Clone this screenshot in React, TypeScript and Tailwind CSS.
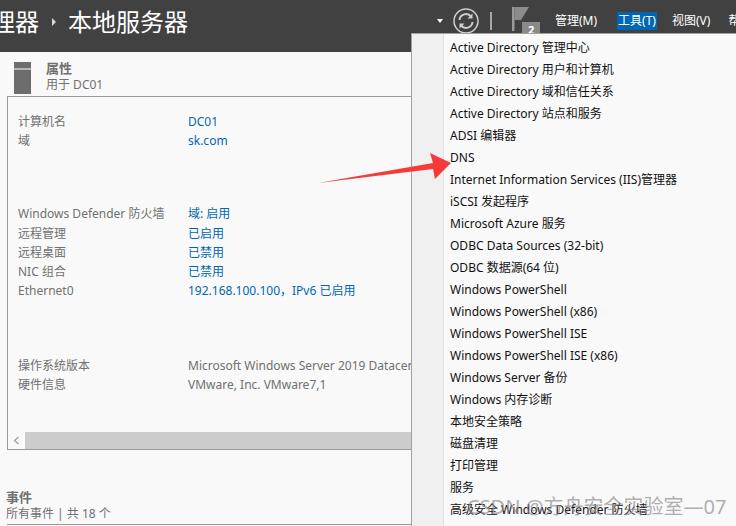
import { useState } from 'react'

const FONT = "font-['Noto_Sans','Noto_Sans_CJK_SC',sans-serif]"

const TOOLS = [
  'Active Directory 管理中心',
  'Active Directory 用户和计算机',
  'Active Directory 域和信任关系',
  'Active Directory 站点和服务',
  'ADSI 编辑器',
  'DNS',
  'Internet Information Services (IIS)管理器',
  'iSCSI 发起程序',
  'Microsoft Azure 服务',
  'ODBC Data Sources (32-bit)',
  'ODBC 数据源(64 位)',
  'Windows PowerShell',
  'Windows PowerShell (x86)',
  'Windows PowerShell ISE',
  'Windows PowerShell ISE (x86)',
  'Windows Server 备份',
  'Windows 内存诊断',
  '本地安全策略',
  '磁盘清理',
  '打印管理',
  '服务',
  '高级安全 Windows Defender 防火墙',
]

function Row({ label, value, link = true }: { label: string; value: string; link?: boolean }) {
  return (
    <div className="flex h-[19.3px] items-center text-xs leading-none whitespace-nowrap">
      <span className="w-[170px] shrink-0 text-[#707070]">{label}</span>
      <span className={link ? 'text-[#0066b4]' : 'text-[#707070]'}>{value}</span>
    </div>
  )
}

function Header() {
  return (
    <div className="flex h-[52px] shrink-0 items-center bg-[#414141] text-white">
      <div className="-ml-[9px] mb-[9px] flex items-center text-2xl leading-none whitespace-nowrap">
        <span>理器</span>
        <span className="mx-[12.5px] h-0 w-0 border-y-[4px] border-l-[4px] border-y-transparent border-l-[#d8d8d8]" />
        <span>本地服务器</span>
      </div>
      <div className="ml-[249px] flex h-full items-center whitespace-nowrap">
        <span className="mt-[-10px] h-0 w-0 border-x-[3.5px] border-t-[4px] border-x-transparent border-t-white" />
        <svg width="28" height="28" viewBox="0 0 28 28" className="mt-[-10px] ml-[9px]" fill="none">
          <circle cx="14" cy="14" r="12" stroke="#cfcfcf" strokeWidth="1.5" />
          <path d="M7.500 13a6.500 6.500 0 0 1 11.500-3.500" stroke="#cfcfcf" strokeWidth="2" />
          <path d="M20.500 15a6.500 6.500 0 0 1-11.500 3.500" stroke="#cfcfcf" strokeWidth="2" />
          <path d="M20.500 6.500v5h-5zM7.500 21.500v-5h5z" fill="#cfcfcf" />
        </svg>
        <span className="mt-[-10px] ml-[10px] h-[18px] w-[2px] bg-[#a8a8a8]" />
        <div className="relative mt-[-12px] ml-[20px] h-[26px] w-[30px] self-center">
          <svg width="18" height="24" viewBox="0 0 18 24" className="absolute top-0 left-0">
            <path d="M0 0h2.500v24H0z" fill="#9a9a9a" />
            <path d="M2.500 0L17 0 9 13H2.500z" fill="#8b8b8b" />
          </svg>
          <span className="absolute top-[15px] left-[10px] h-[14px] w-[18px] bg-[#8a8a8a] pl-[6px] text-[11px] leading-[16px] font-bold">
            2
          </span>
        </div>
        <div className="mt-[-10px] ml-[13px] flex items-center text-xs">
          <span>管理(M)</span>
          <span className="ml-[20px] flex h-[18px] items-center bg-[#0066b4] px-[1px]">工具(T)</span>
          <span className="ml-[15px]">视图(V)</span>
          <span className="ml-[18px]">帮助(H)</span>
        </div>
      </div>
    </div>
  )
}

function Properties() {
  return (
    <div className="w-[411px] shrink-0">
      <div className="flex h-[44px] pl-[14px]">
        <div className="mt-[10px] h-[32px] w-[17px] border-t-[6px] border-[#6d6d6d] bg-[#6d6d6d] shadow-[inset_0_2px_0_#b5b5b5]" />
        <div className="ml-[15px] pt-[8px] text-[#707070]">
          <div className="text-[13px] leading-[17px] font-bold">属性</div>
          <div className="text-xs leading-[16px]">用于 DC01</div>
        </div>
      </div>
      <div className="ml-[7px] flex h-[354px] flex-col overflow-hidden border border-[#9a9a9a] border-r-0">
        <div className="flex-1 pt-[15px] pl-[10px]">
          <Row label="计算机名" value="DC01" />
          <Row label="域" value="sk.com" />
          <div className="h-[54px]" />
          <Row label="Windows Defender 防火墙" value="域: 启用" />
          <Row label="远程管理" value="已启用" />
          <Row label="远程桌面" value="已禁用" />
          <Row label="NIC 组合" value="已禁用" />
          <Row label="Ethernet0" value="192.168.100.100，IPv6 已启用" />
          <div className="h-[55px]" />
          <Row label="操作系统版本" value="Microsoft Windows Server 2019 Datacenter" link={false} />
          <Row label="硬件信息" value="VMware, Inc. VMware7,1" link={false} />
        </div>
        <div className="flex h-[17px] shrink-0 bg-[#cccccc]">
          <div className="flex w-[17px] items-center justify-center bg-[#f9f9f9]">
            <svg width="7" height="9" viewBox="0 0 7 9" fill="none">
              <path d="M5.500 1L1.500 4.500 5.500 8" stroke="#a0a0a0" strokeWidth="1.300" />
            </svg>
          </div>
        </div>
      </div>
      <div className="pt-[39px] pl-[6px] text-[#707070]">
        <div className="text-[13px] leading-[17px] font-bold">事件</div>
        <div className="text-xs leading-[16px]">所有事件 | 共 18 个</div>
      </div>
      <div className="mt-[2px] ml-[7px] h-px bg-[#9a9a9a]" />
    </div>
  )
}

function ToolsMenu({ active, onPick }: { active: string; onPick: (t: string) => void }) {
  return (
    <div className="absolute top-[33px] left-[411px] flex h-[493px] w-[325px] border-t border-l border-[#a0a0a0] bg-[#f9f9f9]">
      <div className="w-[32px] shrink-0 border-r border-[#e2e2e2] bg-[#f0f0f0]" />
      <div className="pt-[3px] pl-[6px]">
        {TOOLS.map(t => (
          <button
            key={t}
            onClick={() => onPick(t)}
            className={`flex h-[22px] items-center text-xs whitespace-nowrap text-[#111111] ${active === t ? 'font-medium' : ''}`}
          >
            {t}
          </button>
        ))}
      </div>
    </div>
  )
}

export default function App() {
  const [active, setActive] = useState('')

  return (
    <div className={`relative flex h-[526px] w-[736px] flex-col overflow-hidden bg-[#f9f9f9] ${FONT}`}>
      <Header />
      <Properties />
      <ToolsMenu active={active} onPick={setActive} />
      {/* annotation arrow */}
      <svg width="140" height="40" viewBox="0 0 140 40" className="absolute top-[150px] left-[315px]">
        <path d="M3 33L118 13 115 3 136 13 120 29 118 19z" fill="#f63a3a" />
      </svg>
      {/* watermark */}
      <span className="absolute top-[495px] left-[467px] text-xl leading-6 whitespace-nowrap text-[#8c8c8c]/70">
        CSDN @方舟安全实验室—07
      </span>
    </div>
  )
}
